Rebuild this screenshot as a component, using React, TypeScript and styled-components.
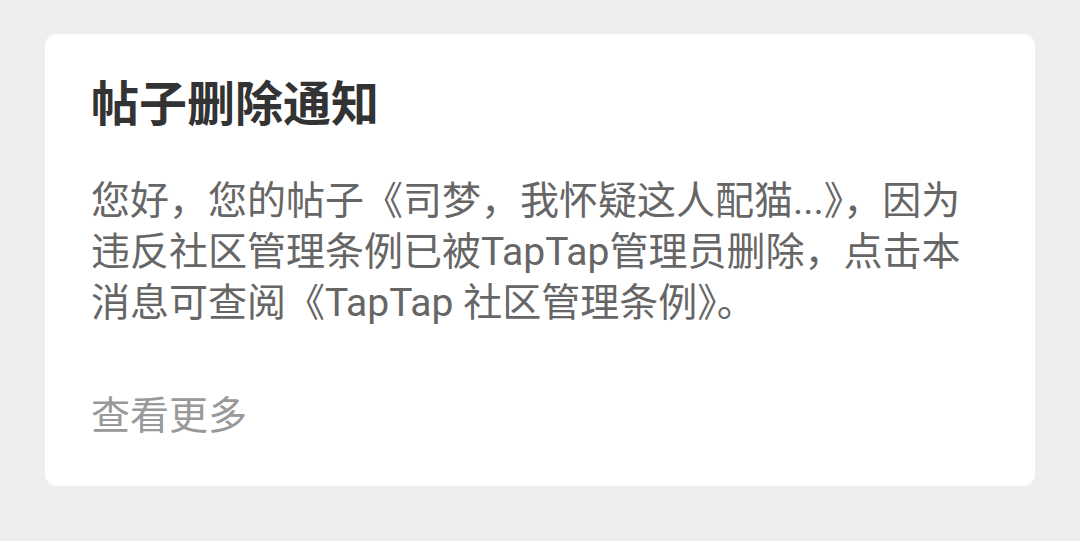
import styled, { createGlobalStyle } from "styled-components";

const GlobalStyle = createGlobalStyle`
  html, body {
    margin: 0;
    padding: 0;
    background: #eeeeee;
  }
  body {
    font-family: Roboto, "Noto Sans CJK SC", sans-serif;
  }
`;

const Page = styled.div`
  width: 1080px;
  height: 541px;
  padding: 34px 45px 0;
  box-sizing: border-box;
  background: #eeeeee;
`;

const Card = styled.div`
  background: #ffffff;
  border-radius: 12px;
  padding: 47px 46px 44px;
  display: flex;
  flex-direction: column;
`;

const Title = styled.h1`
  margin: 0;
  font-size: 48px;
  line-height: 48px;
  font-weight: 700;
  color: #333333;
`;

const Body = styled.p`
  margin: 47px 0 0;
  font-size: 39px;
  line-height: 51px;
  color: #666666;
`;

const More = styled.a`
  margin-top: 62px;
  font-size: 39px;
  line-height: 51px;
  color: #999999;
  text-decoration: none;
  cursor: pointer;
`;

const App = () => {
  return (
    <Page>
      <GlobalStyle />
      <Card>
        <Title>帖子删除通知</Title>
        <Body>
          您好，您的帖子《司梦，我怀疑这人配猫...》，因为违反社区管理条例已被TapTap管理员删除，点击本消息可查阅《TapTap 社区管理条例》。
        </Body>
        <More>查看更多</More>
      </Card>
    </Page>
  );
};

export default App;
